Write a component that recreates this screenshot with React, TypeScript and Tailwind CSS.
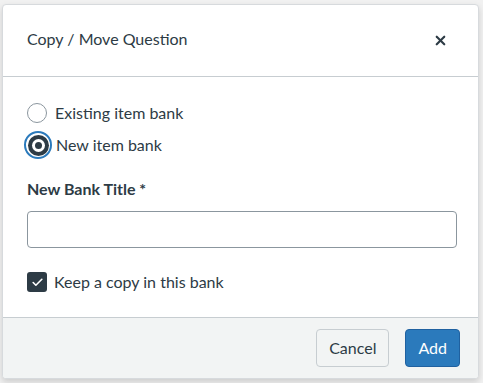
import { X, Check } from 'lucide-react';

export default function App() {
  return (
    <div className="h-[383px] w-[483px] bg-[#f1f1f1] pl-[2px] pt-[4px] font-['Lato','Liberation_Sans',sans-serif] text-[#2d3b45]">
      <div className="flex h-[375px] w-[477px] flex-col overflow-hidden rounded-[4px] border border-[#d7dadd] bg-white shadow-[0_3px_6px_rgba(0,0,0,0.15)]">
        {/* header */}
        <div className="flex h-[72px] shrink-0 items-center justify-between border-b border-[#c7cdd1] pl-[24px] pr-[30px]">
          <h2 className="-mt-[4px] text-[16px] leading-none">Copy / Move Question</h2>
          <X className="h-[15px] w-[15px] text-[#2d3b45]" strokeWidth={3.5} />
        </div>

        {/* body */}
        <div className="flex flex-1 flex-col px-[24px] pt-[24px]">
          <label className="flex h-[24px] items-center gap-[8px]">
            <span className="h-[20px] w-[20px] rounded-full border border-[#8b969e] bg-white" />
            <span className="text-[16px]">Existing item bank</span>
          </label>
          <label className="mt-[8px] flex h-[24px] items-center gap-[4px]">
            <span className="-ml-[3px] flex h-[28px] w-[28px] items-center justify-center rounded-full border-2 border-[#2b7abc] bg-white">
              <span className="flex h-[21px] w-[21px] items-center justify-center rounded-full bg-[#2d3b45]">
                <span className="flex h-[13px] w-[13px] items-center justify-center rounded-full bg-white">
                  <span className="h-[7px] w-[7px] rounded-full bg-[#2d3b45]" />
                </span>
              </span>
            </span>
            <span className="text-[16px]">New item bank</span>
          </label>

          <div className="mt-[20px] text-[16px] font-bold">New Bank Title *</div>
          <input
            className="mt-[10px] h-[37px] w-[430px] rounded-[4px] border border-[#8b969e] bg-white px-[12px] text-[16px] outline-none"
            type="text"
          />

          <label className="mt-[22px] flex items-center gap-[7px]">
            <span className="flex h-[20px] w-[20px] items-center justify-center rounded-[3px] bg-[#2d3b45]">
              <Check className="h-[13px] w-[13px] text-white" strokeWidth={3} />
            </span>
            <span className="text-[16px]">Keep a copy in this bank</span>
          </label>
        </div>

        {/* footer */}
        <div className="flex h-[61px] shrink-0 items-center justify-end gap-[16px] border-t border-[#c7cdd1] bg-[#f2f4f4] pr-[18px]">
          <button className="h-[38px] rounded-[4px] border border-[#c7cdd1] bg-[#f2f4f4] px-[12px] text-[16px] text-[#2d3b45]">
            Cancel
          </button>
          <button className="h-[38px] rounded-[4px] border border-[#2061a0] bg-[#2b7abc] px-[12px] text-[16px] text-white">
            Add
          </button>
        </div>
      </div>
    </div>
  );
}
